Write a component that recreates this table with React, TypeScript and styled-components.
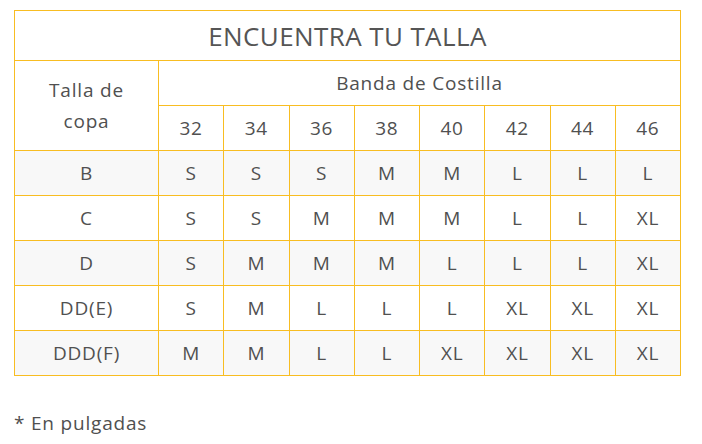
import styled, { createGlobalStyle } from 'styled-components';

const bands = [32, 34, 36, 38, 40, 42, 44, 46];

const rows: { cup: string; sizes: string[] }[] = [
  { cup: 'B', sizes: ['S', 'S', 'S', 'M', 'M', 'L', 'L', 'L'] },
  { cup: 'C', sizes: ['S', 'S', 'M', 'M', 'M', 'L', 'L', 'XL'] },
  { cup: 'D', sizes: ['S', 'M', 'M', 'M', 'L', 'L', 'L', 'XL'] },
  { cup: 'DD(E)', sizes: ['S', 'M', 'L', 'L', 'L', 'XL', 'XL', 'XL'] },
  { cup: 'DDD(F)', sizes: ['M', 'M', 'L', 'L', 'XL', 'XL', 'XL', 'XL'] },
];

function App() {
  return (
    <>
      <GlobalStyle />
      <Page>
        <SizeTable>
          <colgroup>
            <col style={{ width: 144 }} />
            {bands.map((b) => (
              <col key={b} />
            ))}
          </colgroup>
          <thead>
            <tr>
              <TitleCell colSpan={9}>ENCUENTRA TU TALLA</TitleCell>
            </tr>
            <tr>
              <CupHead rowSpan={2}>
                Talla de
                <br />
                copa
              </CupHead>
              <BandHead colSpan={8}>Banda de Costilla</BandHead>
            </tr>
            <tr>
              {bands.map((b) => (
                <Cell key={b}>{b}</Cell>
              ))}
            </tr>
          </thead>
          <tbody>
            {rows.map((row, i) => (
              <Row key={row.cup} $striped={i % 2 === 0}>
                <Cell>{row.cup}</Cell>
                {row.sizes.map((s, j) => (
                  <Cell key={j}>{s}</Cell>
                ))}
              </Row>
            ))}
          </tbody>
        </SizeTable>
        <Note>* En pulgadas</Note>
      </Page>
    </>
  );
}

const GlobalStyle = createGlobalStyle`
  body {
    margin: 0;
    background: #fff;
    font-family: 'Open Sans', Lato, sans-serif;
    color: #505050;
  }
`;

const Page = styled.div`
  padding: 10px 0 0 14px;
`;

const SizeTable = styled.table`
  border-collapse: collapse;
  table-layout: fixed;
  width: 667px;

  td,
  th {
    border: 1px solid #f8bd22;
    text-align: center;
    padding: 0;
    font-weight: 400;
    letter-spacing: 0.8px;
  }
`;

const TitleCell = styled.th`
  height: 49px;
  font-size: 26px;
  color: #555;
  letter-spacing: 0.4px !important;
`;

const CupHead = styled.th`
  font-size: 19px;
  line-height: 31px;
`;

const BandHead = styled.th`
  height: 44px;
  font-size: 19px;
`;

const Row = styled.tr<{ $striped: boolean }>`
  background: ${(p) => (p.$striped ? '#f8f8f8' : '#fff')};
`;

const Cell = styled.td`
  height: 44px;
  font-size: 19px;
`;

const Note = styled.p`
  margin: 34px 0 0;
  font-size: 19px;
  letter-spacing: 0.8px;
`;

export default App;
